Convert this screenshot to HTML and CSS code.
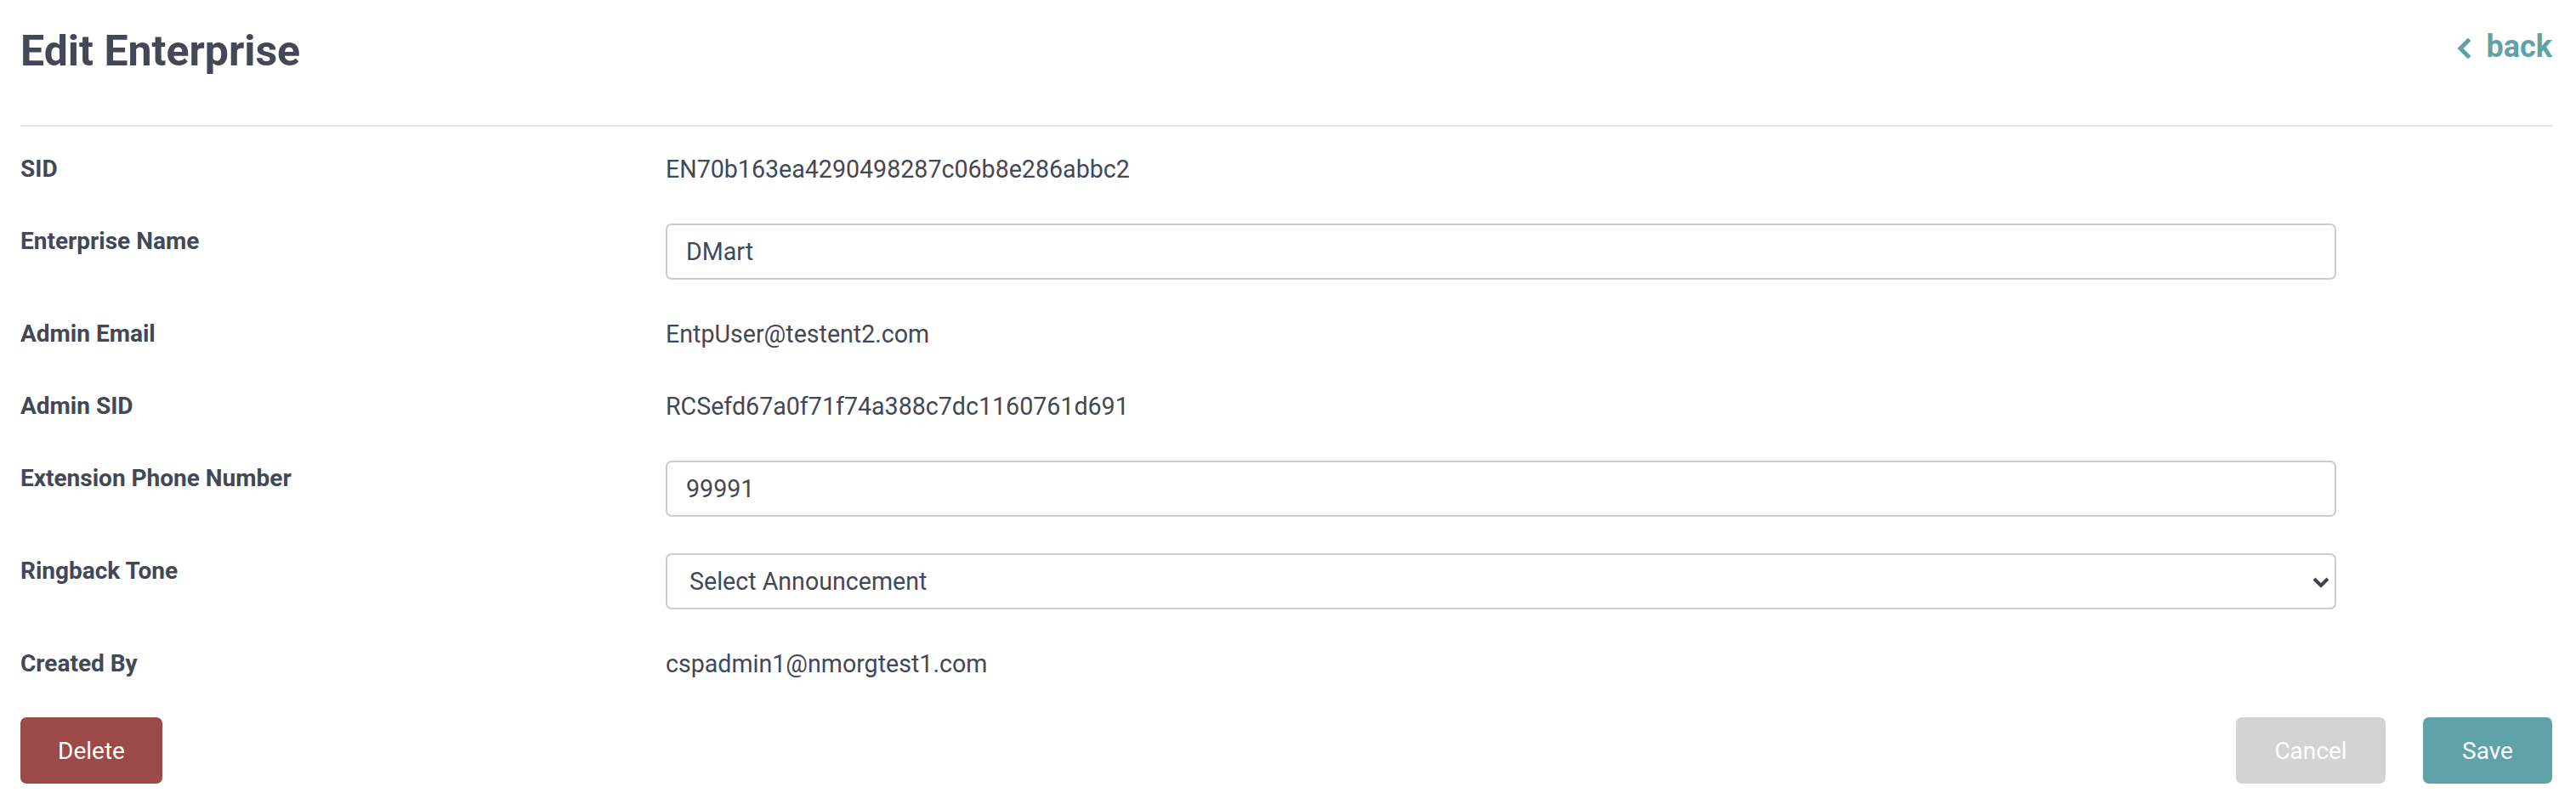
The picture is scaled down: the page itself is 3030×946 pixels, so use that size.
FILE: index.html
```html
<!DOCTYPE html>
<html lang="en">
<head>
<meta charset="utf-8">
<title>Edit Enterprise</title>
<link rel="stylesheet" href="styles.css">
</head>
<body>
<div class="page">
  <header class="header">
    <h1 class="title">Edit Enterprise</h1>
    <a class="back" href="#">
      <svg class="back-icon" width="18" height="24" viewBox="0 0 18 24"><polyline points="14,3 5,12 14,21" fill="none" stroke="currentColor" stroke-width="5" stroke-linecap="square" stroke-linejoin="miter"/></svg>
      <span>back</span>
    </a>
  </header>
  <hr class="divider">
  <div class="fields">
    <div class="label">SID</div>
    <div class="value">EN70b163ea4290498287c06b8e286abbc2</div>

    <div class="label">Enterprise Name</div>
    <div class="value"><input class="control" type="text" value="DMart"></div>

    <div class="label">Admin Email</div>
    <div class="value">EntpUser@testent2.com</div>

    <div class="label">Admin SID</div>
    <div class="value">RCSefd67a0f71f74a388c7dc1160761d691</div>

    <div class="label">Extension Phone Number</div>
    <div class="value"><input class="control" type="text" value="99991"></div>

    <div class="label">Ringback Tone</div>
    <div class="value">
      <div class="select-wrap">
        <select class="control select">
          <option>Select Announcement</option>
        </select>
        <svg class="select-icon" width="20" height="13" viewBox="0 0 20 13"><polyline points="2,2 10,10 18,2" fill="none" stroke="currentColor" stroke-width="4"/></svg>
      </div>
    </div>

    <div class="label">Created By</div>
    <div class="value">cspadmin1@nmorgtest1.com</div>
  </div>
  <div class="actions">
    <button class="btn btn-delete" type="button">Delete</button>
    <div class="actions-right">
      <button class="btn btn-cancel" type="button">Cancel</button>
      <button class="btn btn-save" type="button">Save</button>
    </div>
  </div>
</div>
</body>
</html>
```
FILE: styles.css
```css
* { box-sizing: border-box; }
html, body { margin: 0; padding: 0; background: #ffffff; }
body {
  font-family: Roboto, "Liberation Sans", Arial, sans-serif;
  color: #434857;
}
.page {
  padding: 0 28px 0 24px;
}
.header {
  display: flex;
  justify-content: space-between;
  align-items: flex-start;
  padding-top: 30px;
}
.title {
  margin: 0;
  font-size: 50px;
  line-height: 60px;
  font-weight: 700;
  color: #434857;
}
.back {
  display: flex;
  align-items: center;
  gap: 17px;
  margin-top: 3px;
  color: #5fa3a8;
  text-decoration: none;
  font-size: 36px;
  line-height: 44px;
  font-weight: 700;
}
.back-icon { display: block; margin-top: 3px; }
.divider {
  margin: 57px 0 0 0;
  border: 0;
  height: 2px;
  background: #e3e3e3;
}
.fields {
  display: grid;
  grid-template-columns: 759px 1965px;
  row-gap: 43px;
  align-items: start;
  margin-top: 29px;
}
.label {
  font-size: 28px;
  line-height: 42px;
  font-weight: 700;
}
.value {
  font-size: 28.6px;
  line-height: 42px;
  font-weight: 400;
}
.control {
  display: block;
  width: 100%;
  height: 66px;
  border: 2px solid #cccccc;
  border-radius: 7px;
  padding: 0 22px;
  font-family: Roboto, "Liberation Sans", Arial, sans-serif;
  font-size: 28.6px;
  color: #434857;
  background: #ffffff;
  outline: none;
}
.select-wrap { position: relative; }
.select {
  appearance: none;
  -webkit-appearance: none;
  padding: 0 60px 0 26px;
}
.select-icon {
  position: absolute;
  right: 8px;
  top: 28px;
  color: #3f4450;
  pointer-events: none;
}
.actions {
  display: flex;
  justify-content: space-between;
  align-items: center;
  margin-top: 42px;
}
.actions-right {
  display: flex;
  gap: 44px;
}
.btn {
  height: 78px;
  border: 0;
  border-radius: 7px;
  color: #ffffff;
  font-family: Roboto, "Liberation Sans", Arial, sans-serif;
  font-size: 28px;
  font-weight: 400;
  padding: 0;
}
.btn-delete { width: 167px; background: #9c4a47; }
.btn-cancel { width: 176px; background: #d3d3d3; }
.btn-save { width: 152px; background: #5fa3a8; }
```
